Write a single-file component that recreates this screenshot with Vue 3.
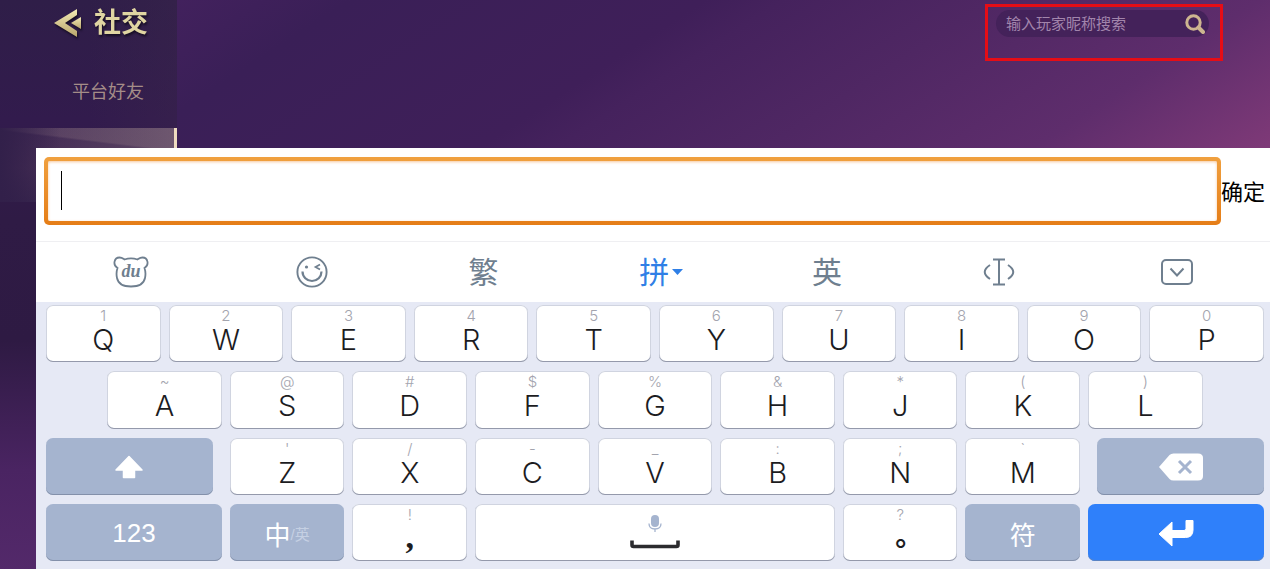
<script setup>
import { ref } from 'vue'

const search = ref('')
const draft = ref('')

const letterRows = [
  [['Q', '1'], ['W', '2'], ['E', '3'], ['R', '4'], ['T', '5'], ['Y', '6'], ['U', '7'], ['I', '8'], ['O', '9'], ['P', '0']],
  [['A', '~'], ['S', '@'], ['D', '#'], ['F', '$'], ['G', '%'], ['H', '&'], ['J', '*'], ['K', '('], ['L', ')']],
  [['Z', "'"], ['X', '/'], ['C', '-'], ['V', '_'], ['B', ':'], ['N', ';'], ['M', '`']],
]

function type(ch) {
  draft.value += ch
}
function erase() {
  draft.value = draft.value.slice(0, -1)
}
</script>

<template>
  <div class="page">
    <main class="game">
      <aside class="sidebar">
        <div class="title">
          <button class="back" type="button" aria-label="返回">
            <svg width="30" height="28" viewBox="0 0 30 28">
              <defs>
                <linearGradient id="gold" x1="0" y1="0" x2="0" y2="1">
                  <stop offset="0" stop-color="#f3eab4" />
                  <stop offset="1" stop-color="#b9a56c" />
                </linearGradient>
              </defs>
              <path d="M1 14 24 0V6L12 14 24 22V28Z" fill="url(#gold)" />
              <path d="M18 14 28 8V20Z" fill="url(#gold)" />
            </svg>
          </button>
          <h1>社交</h1>
        </div>
        <nav>
          <a class="tab" href="#friends">平台好友</a>
          <div class="tab-active"></div>
        </nav>
      </aside>
      <section class="stage">
        <form class="mark" @submit.prevent>
          <div class="search">
            <input v-model="search" type="text" placeholder="输入玩家昵称搜索" aria-label="输入玩家昵称搜索" />
            <button type="submit" aria-label="搜索">
              <svg width="20" height="20" viewBox="0 0 20 20" fill="none" stroke="#cdb590">
                <circle cx="8.5" cy="8.5" r="6.7" stroke-width="3" />
                <path d="M13.5 13.5 18 18" stroke-width="4" stroke-linecap="round" />
              </svg>
            </button>
          </div>
        </form>
      </section>
    </main>

    <section class="panel">
      <div class="entry">
        <label class="field">
          <input v-model="draft" type="text" aria-label="输入内容" />
          <span v-if="!draft" class="caret"></span>
        </label>
        <button class="confirm" type="button">确定</button>
      </div>

      <div class="tools">
        <button type="button" aria-label="输入法">
          <svg width="36" height="32" viewBox="0 0 36 32">
            <path
              d="M4.5 12C-.5 9 1 1.5 6.500 1.500c2.500 0 3.500 1 5 2 4-1.300 9-1.300 13 0 1.500-1 2.500-2 5-2 5.500 0 7 7.500 2 10.500 1 3 1.300 6.500.5 10-1.200 6-5.500 8.500-14 8.500S5.200 28 4 22c-.8-3.500-.5-7 .5-10Z"
              fill="none" stroke="#6f7f8f" stroke-width="1.800" />
            <text x="18" y="21" text-anchor="middle" class="du">du</text>
          </svg>
        </button>
        <button type="button" aria-label="表情">
          <svg width="32" height="32" viewBox="0 0 32 32" fill="none" stroke="#6f7f8f" stroke-width="1.900">
            <circle cx="16" cy="16" r="14.600" />
            <path d="M6.500 15.500a9.500 9.500 0 0 0 19 0" stroke-width="2.200" />
            <path d="M24 8.500 19.500 11 24 13.500" stroke-width="1.700" />
            <circle cx="10.500" cy="11" r="1.600" fill="#6f7f8f" stroke="none" />
          </svg>
        </button>
        <button class="mode" type="button">繁</button>
        <button class="mode current" type="button">
          拼<svg width="11" height="6" viewBox="0 0 11 6"><path d="M0 0H11L5.500 6Z" fill="#2f7fe6" /></svg>
        </button>
        <button class="mode" type="button">英</button>
        <button type="button" aria-label="移动光标">
          <svg width="32" height="28" viewBox="0 0 32 28" fill="none" stroke="#6f7f8f" stroke-width="2">
            <path d="M10 1.500H22M10 26.500H22M16 1.500V26.500" />
            <path d="M7 7Q-3.500 14 7 21M25 7Q35.500 14 25 21" />
          </svg>
        </button>
        <button type="button" aria-label="收起键盘">
          <svg width="32" height="26" viewBox="0 0 32 26" fill="none" stroke="#6f7f8f" stroke-width="2">
            <rect x="1" y="1" width="30" height="24" rx="4" />
            <path d="M9.500 9.500 16 16.500 22.500 9.500" />
          </svg>
        </button>
      </div>

      <div class="keys">
        <button v-for="[k, h] in letterRows[0]" :key="k" class="key" type="button" @click="type(k)">
          <small>{{ h }}</small><b>{{ k }}</b>
        </button>

        <i class="half"></i>
        <button v-for="[k, h] in letterRows[1]" :key="k" class="key" type="button" @click="type(k)">
          <small>{{ h }}</small><b>{{ k }}</b>
        </button>
        <i class="half"></i>

        <button class="key grey wide shift" type="button" aria-label="大写">
          <svg width="30" height="24" viewBox="0 0 30 24">
            <path d="M15 1.500 28 15H20.500V22.500H9.500V15H2Z" fill="#fff" stroke="#fff" stroke-width="1.500" stroke-linejoin="round" />
          </svg>
        </button>
        <button v-for="[k, h] in letterRows[2]" :key="k" class="key" type="button" @click="type(k)">
          <small>{{ h }}</small><b>{{ k }}</b>
        </button>
        <button class="key grey wide erase" type="button" aria-label="删除" @click="erase">
          <svg width="46" height="28" viewBox="0 0 46 28">
            <path d="M1 14 11.500 2Q13 .5 15.500.5H40Q45 .5 45 5V23Q45 27.500 40 27.500H15.500Q13 27.500 11.500 26Z" fill="#fff" />
            <path d="M21 8 33 20M33 8 21 20" stroke="#a5b4cf" stroke-width="3" />
          </svg>
        </button>

        <button class="key grey wide" type="button">123</button>
        <button class="key grey lang" type="button">中<span>/英</span></button>
        <button class="key" type="button" @click="type('，')"><small>!</small><b class="comma">,</b></button>
        <button class="key space" type="button" aria-label="空格" @click="type(' ')">
          <svg width="50" height="34" viewBox="0 0 50 34">
            <rect x="21" y="0" width="8" height="12" rx="4" fill="#a5b4cf" />
            <path d="M19 8.500Q19 14 25 14T31 8.500M25 14V17" fill="none" stroke="#a5b4cf" stroke-width="1.300" />
            <path d="M2 25.500V30Q2 31.500 3.500 31.500H46.500Q48 31.500 48 30V25.500" fill="none" stroke="#2b2b2e" stroke-width="3.600" />
          </svg>
        </button>
        <button class="key" type="button" @click="type('。')"><small>?</small><b class="stop">。</b></button>
        <button class="key grey symbols" type="button">符</button>
        <button class="key blue wide" type="button" aria-label="换行">
          <svg width="36" height="28" viewBox="0 0 36 28">
            <path d="M1 15 14 3V11.500H26Q28 11.500 28 9.500V1.500H35V11Q35 18.500 27.500 18.500H14V27Z" fill="#fff" stroke="#fff" stroke-linejoin="round" />
          </svg>
        </button>
      </div>
    </section>
  </div>
</template>

<style>
body {
  margin: 0;
  background: #fff;
}
</style>

<style scoped>
.page {
  box-sizing: border-box;
  min-height: 100vh;
  padding-bottom: 2px;
  display: grid;
  font-family: "Liberation Sans", "Noto Sans CJK SC", sans-serif;
}
button {
  font: inherit;
  color: inherit;
  background: none;
  border: 0;
  padding: 0;
  cursor: pointer;
}
svg {
  display: block;
}

.game {
  grid-area: 1 / 1;
  display: flex;
  background: #3b1f57;
}
.sidebar {
  width: 177px;
  background:
    linear-gradient(90deg, #2c1a4600 50%, #3c264d66),
    linear-gradient(#2f1e48, #321b4d 120px, #2f1b45 220px, #2e1a43 340px, #4a2462 470px, #53296a);
}
.title {
  display: flex;
  align-items: center;
  gap: 11px;
  height: 46px;
  padding-left: 53px;
}
.back,
.title h1 {
  filter: drop-shadow(1px 2px 1px #150c22);
}
.title h1 {
  margin: 0;
  font-size: 27px;
  line-height: 46px;
  font-weight: 700;
  color: #e0d5a2;
}
.tab {
  display: block;
  height: 82px;
  box-sizing: border-box;
  padding: 32px 0 0 72px;
  font-size: 18px;
  line-height: 28px;
  color: #a58d88;
  text-decoration: none;
}
.tab-active {
  height: 74px;
  border-right: 3px solid #efdcc0;
  background:
    linear-gradient(90deg, #32204a, #32204a00 60px),
    linear-gradient(187deg, #f5d9c01c 22px, #fff0 24px),
    linear-gradient(90deg, #5d476500, #5d4765),
    linear-gradient(#3a2350, #432a52 40px, #32204a);
}
.stage {
  flex: 1;
  display: flex;
  justify-content: flex-end;
  align-items: flex-start;
  padding: 4px 47px 0 0;
  background: linear-gradient(147deg, #42215d 0, #3a1f57 95px, #3f1f59 288px, #45225d 330px, #4f2763 445px, #5e2d6c 590px, #803a78 725px);
}
.mark {
  box-sizing: border-box;
  width: 238px;
  height: 57px;
  padding: 3px 11px 0 8px;
  border: 3px solid #e60d16;
}
.search {
  display: flex;
  align-items: center;
  height: 27px;
  padding: 0 4px 0 10px;
  border-radius: 14px;
  background: #44225a;
}
.search input {
  flex: 1;
  min-width: 0;
  padding: 0 0 2px;
  border: 0;
  outline: 0;
  background: none;
  color: #a78bb0;
  font: 15px "Noto Sans CJK SC", sans-serif;
}
.search input::placeholder {
  color: #a285ac;
  opacity: 1;
}

.panel {
  grid-area: 1 / 1;
  display: flex;
  flex-direction: column;
  margin: 148px 0 0 36px;
  background: #fff;
  z-index: 1;
}
.entry {
  display: flex;
  align-items: center;
  height: 94px;
  box-sizing: border-box;
  padding: 0 5px 7px 8px;
  border-bottom: 1px solid #efeff2;
}
.field {
  position: relative;
  flex: 1;
  height: 60px;
  padding: 4px;
  border-radius: 5px;
  background: linear-gradient(#f0a03f, #e57d17);
}
.field input {
  box-sizing: border-box;
  width: 100%;
  height: 100%;
  padding: 0 13px;
  border: 0;
  outline: 0;
  border-radius: 2px;
  font: 28px "Liberation Sans", "Noto Sans CJK SC", sans-serif;
  background: #fff;
  box-shadow: inset 0 1px 3px #f6c79c;
}
.caret {
  position: absolute;
  left: 17px;
  top: 14px;
  width: 1px;
  height: 39px;
  background: #000;
}
.confirm {
  padding-bottom: 2px;
  font-size: 22px;
  color: #000;
}

.tools {
  display: grid;
  grid-template-columns: 380fr repeat(5, 343fr) 371fr;
  height: 60px;
  font-size: 30px;
  color: #6f7f8f;
}
.tools button {
  display: flex;
  align-items: center;
  justify-content: center;
}
.tools .mode {
  padding-bottom: 4px;
}
.tools .current {
  gap: 3px;
  padding-left: 12px;
  color: #2f7fe6;
}
.current svg {
  margin-top: 4px;
}
.du {
  font: italic 700 18px "Liberation Serif", serif;
  fill: #6f7f8f;
}

.keys {
  flex: 1;
  display: grid;
  grid-template-columns: repeat(20, minmax(0, 1fr));
  grid-template-rows: repeat(4, minmax(57px, 1fr));
  gap: 9px 8px;
  padding: 3px 6px 8px 10px;
  background: #e6e9f5;
}
.key {
  grid-column: span 2;
  display: flex;
  flex-direction: column;
  align-items: center;
  border-radius: 7px;
  background: #fff;
  box-shadow: inset 0 -1px 0 #9499ab, inset 0 0 0 1px #d0d4e0;
  color: #1c1c1f;
}
.key small {
  height: 18px;
  margin-top: 2px;
  font: 300 15px/18px Inter, sans-serif;
  color: #a3a4ae;
}
.key b {
  font: 300 29px/30px Inter, sans-serif;
}
.key .comma {
  margin-top: 4px;
  font: 700 34px/18px "Liberation Serif", serif;
}
.key .stop {
  padding-left: 18px;
  font: 700 28px/20px "Noto Sans CJK SC", sans-serif;
}
.half {
  grid-column: span 1;
}
.wide {
  grid-column: span 3;
}
.shift {
  margin-right: 9px;
}
.erase {
  margin-left: 9px;
}
.space {
  grid-column: span 6;
  padding-top: 11px;
}
.grey,
.blue {
  justify-content: center;
  padding-top: 2px;
  font-size: 26px;
  color: #fff;
}
.grey {
  background: #a5b4cf;
  box-shadow: inset 0 -1px 0 #8390aa;
}
.blue {
  background: #2f80fa;
  box-shadow: inset 0 -1px 0 #5a83c2;
}
.lang {
  flex-direction: row;
  align-items: center;
}
.lang span {
  font-size: 15px;
  color: #c5d0e3;
}
</style>
